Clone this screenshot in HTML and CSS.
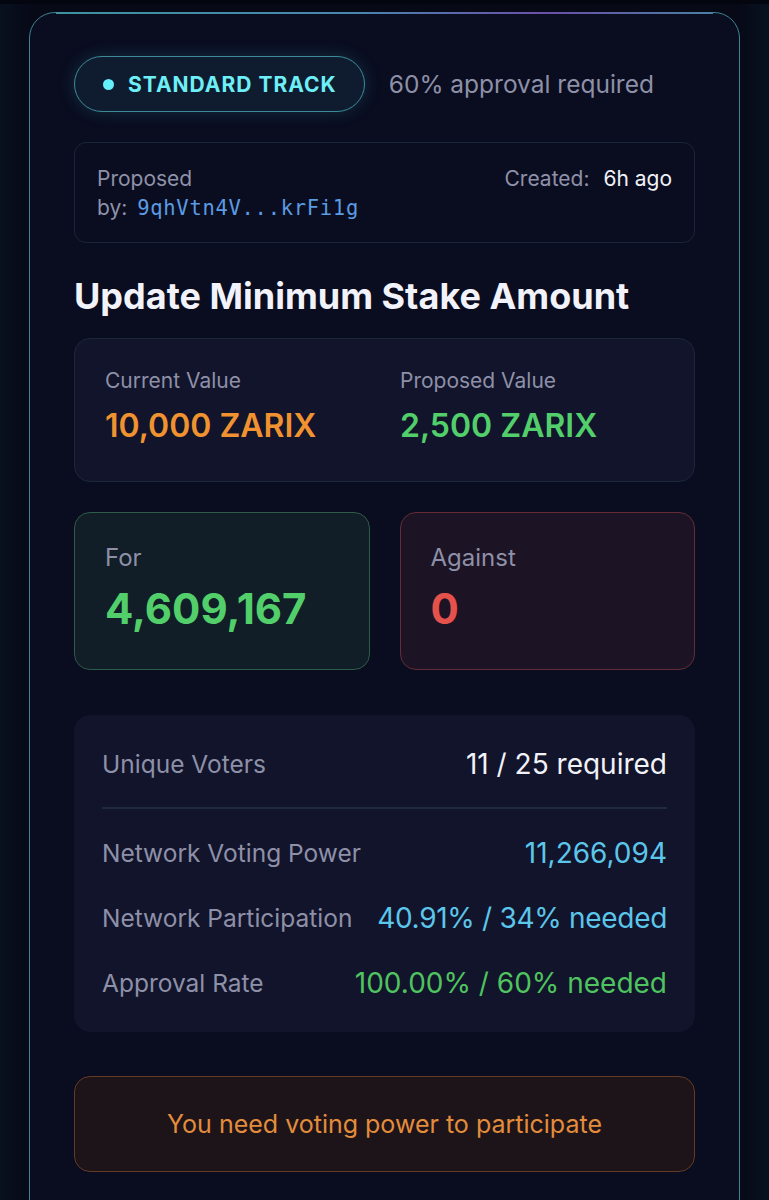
FILE: index.html
```html
<!DOCTYPE html>
<html lang="en">
<head>
<meta charset="utf-8">
<title>Proposal</title>
<link rel="stylesheet" href="styles.css">
</head>
<body>
<div class="page">
  <div class="card">
    <div class="card-accent"></div>
    <div class="header">
      <div class="pill"><span class="dot"></span><span class="pill-text">STANDARD TRACK</span></div>
      <div class="approval">60% approval required</div>
    </div>

    <div class="meta">
      <div class="meta-left">
        <div class="muted">Proposed</div>
        <div><span class="muted">by:</span> <span class="addr">9qhVtn4V...krFi1g</span></div>
      </div>
      <div class="meta-right"><span class="muted">Created:</span> <span class="white">6h ago</span></div>
    </div>

    <h1 class="title">Update Minimum Stake Amount</h1>

    <div class="values">
      <div class="value-col">
        <div class="label">Current Value</div>
        <div class="big orange">10,000 ZARIX</div>
      </div>
      <div class="value-col">
        <div class="label">Proposed Value</div>
        <div class="big green">2,500 ZARIX</div>
      </div>
    </div>

    <div class="votes">
      <div class="vote for">
        <div class="vote-label">For</div>
        <div class="vote-num green">4,609,167</div>
      </div>
      <div class="vote against">
        <div class="vote-label">Against</div>
        <div class="vote-num red">0</div>
      </div>
    </div>

    <div class="stats">
      <div class="row"><span class="row-label">Unique Voters</span><span class="row-val white">11 / 25 required</span></div>
      <div class="divider"></div>
      <div class="row"><span class="row-label">Network Voting Power</span><span class="row-val cyan">11,266,094</span></div>
      <div class="row"><span class="row-label">Network Participation</span><span class="row-val cyan narrow">40.91% / 34% needed</span></div>
      <div class="row"><span class="row-label">Approval Rate</span><span class="row-val green2">100.00% / 60% needed</span></div>
    </div>

    <div class="warning">You need voting power to participate</div>
  </div>
</div>
</body>
</html>
```

FILE: styles.css
```css
* { box-sizing: border-box; }
html, body { margin: 0; padding: 0; }
body {
  background: #070917;
  font-family: Inter, "Noto Sans", sans-serif;
  color: #8f91a9;
  height: 1200px;
  overflow: hidden;
}
.page {
  padding: 8px 29px 0 29px;
  background: linear-gradient(90deg, #08111f 0%, #070917 4%, #070917 96%, #08121f 100%);
  border-top: 4px solid #04060f;
  height: 1200px;
}
.card {
  position: relative;
  border: 1.5px solid #3a8493;
  border-radius: 26px;
  background: #0a0c1f;
  padding: 43px 44px 60px 44px;
  height: 1300px;
}
.card-accent {
  position: absolute;
  top: -1.5px;
  left: 26px;
  right: 26px;
  height: 2px;
  background: linear-gradient(90deg, #3d929e 0%, #4a86b0 45%, #6a4fa8 75%, #4a80a2 100%);
}
.header {
  display: flex;
  align-items: center;
  gap: 24px;
}
.pill {
  display: flex;
  align-items: center;
  gap: 14px;
  height: 56px;
  padding: 0 27px 0 28px;
  border: 1.5px solid #3c8c98;
  border-radius: 28px;
  background: #0f1c2f;
  box-shadow: 0 0 18px rgba(60, 200, 230, 0.18);
}
.dot {
  width: 11px;
  height: 11px;
  border-radius: 50%;
  background: #63f0fb;
}
.pill-text {
  font-size: 21px;
  font-weight: 700;
  letter-spacing: 1px;
  color: #6eeef6;
}
.approval {
  font-size: 24.5px;
  color: #8e90a8;
}
.meta {
  margin-top: 30px;
  display: flex;
  justify-content: space-between;
  align-items: flex-start;
  border: 1.5px solid #1b2537;
  border-radius: 12px;
  background: #0a0d1f;
  padding: 21px 22px 20px 22px;
  height: 101px;
  font-size: 21px;
  line-height: 29px;
}
.muted { color: #8f91a9; }
.white { color: #f1f2f8; }
.addr {
  font-family: "DejaVu Sans Mono", "Liberation Mono", monospace;
  font-size: 20.5px;
  color: #5a9be2;
  margin-left: 4px;
  letter-spacing: 0.7px;
}
.meta-right .white { margin-left: 8px; }
.title {
  margin: 31px 0 0 0;
  font-size: 36px;
  line-height: 44px;
  font-weight: 700;
  color: #f1f2fa;
}
.values {
  margin-top: 20px;
  display: grid;
  grid-template-columns: 295px 1fr;
  border: 1.5px solid #1c283a;
  border-radius: 16px;
  background: #11142a;
  height: 144px;
  padding: 27px 30px;
}
.label {
  font-size: 21px;
  line-height: 30px;
  color: #8e90a8;
}
.big {
  margin-top: 12px;
  font-size: 32px;
  line-height: 36px;
  font-weight: 600;
}
.orange { color: #f0922f; }
.green { color: #52cf6b; }
.green2 { color: #4fc35f; }
.red { color: #e5514b; }
.cyan { color: #5cc6ea; }
.votes {
  margin-top: 30px;
  display: grid;
  grid-template-columns: 1fr 1fr;
  gap: 30px;
}
.vote {
  height: 158px;
  border-radius: 16px;
  padding: 29px 30px;
}
.vote.for {
  border: 1.5px solid #2d5c48;
  background: #111d27;
}
.vote.against {
  border: 1.5px solid #642c37;
  background: #1c1424;
}
.vote-label {
  font-size: 24px;
  line-height: 32px;
  color: #8e90a8;
}
.vote-num {
  margin-top: 10px;
  font-size: 42px;
  line-height: 50px;
  font-weight: 700;
}
.stats {
  margin-top: 45px;
  border-radius: 16px;
  background: #11142a;
  padding: 32px 28px 28px 28px;
  height: 317px;
}
.row {
  display: flex;
  justify-content: space-between;
  align-items: center;
  height: 34px;
  font-size: 24.5px;
}
.row + .row { margin-top: 31px; }
.row-label { color: #8e90a8; }
.row-val { font-size: 28px; }
.row-val.narrow { letter-spacing: -0.3px; }
.divider {
  height: 1.5px;
  background: #1f2b3d;
  margin: 26px 0 27px 0;
}
.warning {
  margin-top: 44px;
  height: 96px;
  display: flex;
  align-items: center;
  justify-content: center;
  border: 1.5px solid #653a25;
  border-radius: 16px;
  background: #1c1419;
  color: #e38c3c;
  font-size: 25px;
}
```
